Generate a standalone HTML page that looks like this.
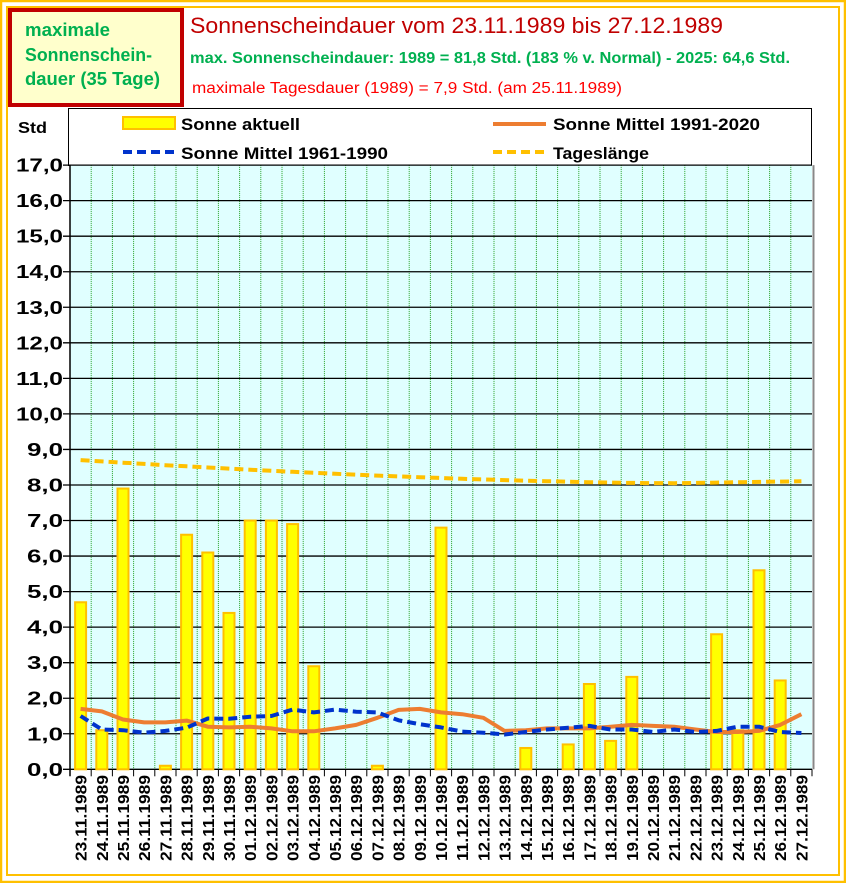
<!DOCTYPE html>
<html><head><meta charset="utf-8"><style>
html,body{margin:0;padding:0;background:#fff}
svg{display:block}
text{font-family:"Liberation Sans",sans-serif;font-weight:bold}
</style></head><body>
<svg id="s" width="846" height="883" xmlns="http://www.w3.org/2000/svg">
<rect x="1" y="1" width="844" height="881" fill="#fff" stroke="#FFC000" stroke-width="2.5"/>
<rect x="7" y="7" width="832" height="868" fill="none" stroke="#FFC000" stroke-width="2"/>
<rect x="10" y="10" width="172" height="95" fill="#FFFFCC" stroke="#C00000" stroke-width="4"/>
<text x="25" y="36" fill="#00B050" font-size="18" textLength="85" lengthAdjust="spacingAndGlyphs">maximale</text>
<text x="25" y="61" fill="#00B050" font-size="18" textLength="127" lengthAdjust="spacingAndGlyphs">Sonnenschein-</text>
<text x="25" y="85" fill="#00B050" font-size="18" textLength="135" lengthAdjust="spacingAndGlyphs">dauer (35 Tage)</text>
<text x="190" y="33" fill="#C00000" font-size="22" textLength="533" lengthAdjust="spacingAndGlyphs" style="font-weight:normal">Sonnenscheindauer vom 23.11.1989 bis 27.12.1989</text>
<text x="190" y="63" fill="#00B050" font-size="15.5" textLength="600" lengthAdjust="spacingAndGlyphs">max. Sonnenscheindauer: 1989 = 81,8 Std. (183 % v. Normal) - 2025: 64,6 Std.</text>
<text x="192" y="93" fill="#FF0000" font-size="15.5" textLength="430" lengthAdjust="spacingAndGlyphs" style="font-weight:normal">maximale Tagesdauer (1989) = 7,9 Std. (am 25.11.1989)</text>
<rect x="68.5" y="108.5" width="743" height="57" fill="#fff" stroke="#000" stroke-width="1"/>
<rect x="123" y="117" width="52" height="12" fill="#FFFF00" stroke="#FFC000" stroke-width="2"/>
<text x="181" y="130" font-size="17" textLength="119" lengthAdjust="spacingAndGlyphs">Sonne aktuell</text>
<line x1="123" y1="152" x2="175" y2="152" stroke="#0033CC" stroke-width="4" stroke-dasharray="9,5"/>
<text x="181" y="159" font-size="17" textLength="207" lengthAdjust="spacingAndGlyphs">Sonne Mittel 1961-1990</text>
<line x1="493" y1="124" x2="546" y2="124" stroke="#ED7D31" stroke-width="4"/>
<text x="553" y="130" font-size="17" textLength="207" lengthAdjust="spacingAndGlyphs">Sonne Mittel 1991-2020</text>
<line x1="493" y1="152" x2="546" y2="152" stroke="#FFC000" stroke-width="4" stroke-dasharray="9,5"/>
<text x="553" y="159" font-size="17" textLength="96" lengthAdjust="spacingAndGlyphs">Tageslänge</text>
<text x="18" y="133" font-size="16" textLength="29" lengthAdjust="spacingAndGlyphs">Std</text>
<g id="g"></g>
</svg>
<script>
var g=document.getElementById('g'),NS='http://www.w3.org/2000/svg';
function el(t,a,txt){var e=document.createElementNS(NS,t);for(var k in a)e.setAttribute(k,a[k]);if(txt!=null)e.textContent=txt;g.appendChild(e);return e;}
var X0=70,X1=812,Y0=769.3,U=35.54,N=35,W=(X1-X0)/N;
function Y(v){return Y0-v*U;}
el('rect',{x:X0,y:Y(17),width:X1-X0,height:Y0-Y(17),fill:'#E0FFFF'});
el('line',{x1:X1+1.5,y1:Y(17),x2:X1+1.5,y2:Y0,stroke:'#888','stroke-width':2});
for(var i=1;i<N;i++){var x=X0+i*W;el('line',{x1:x,y1:Y(17),x2:x,y2:Y0,stroke:'#22A022','stroke-width':1,'stroke-dasharray':'1,1'});}
for(var v=0;v<=17;v++){var y=Y(v);el('line',{x1:63,y1:y,x2:X1,y2:y,stroke:'#000','stroke-width':1.3});
var s=v+',0';el('text',{x:63,y:y+6.5,'font-size':18,'text-anchor':'end',textLength:(s.length==4?47:36),lengthAdjust:'spacingAndGlyphs'},s);}
el('line',{x1:X0,y1:Y(17),x2:X0,y2:Y0+7,stroke:'#000','stroke-width':1.5});
var bars=[4.7,1.1,7.9,0,0.1,6.6,6.1,4.4,7.0,7.0,6.9,2.9,0,0,0.1,0,0,6.8,0,0,0,0.6,0,0.7,2.4,0.8,2.6,0,0,0,3.8,1.1,5.6,2.5,0];
for(var i=0;i<N;i++){var cx=X0+(i+0.5)*W;if(bars[i]>0)el('rect',{x:cx-5.5,y:Y(bars[i]),width:11,height:Y0-Y(bars[i]),fill:'#FFFF00',stroke:'#FFC000','stroke-width':2});
el('line',{x1:X0+(i+1)*W,y1:Y0,x2:X0+(i+1)*W,y2:Y0+7,stroke:'#000','stroke-width':1});}
function pl(d,a){var p=d.map(function(v,i){return (X0+(i+0.5)*W).toFixed(1)+','+Y(v).toFixed(1)}).join(' ');a.points=p;a.fill='none';a['stroke-linejoin']='round';el('polyline',a);}
var tl=[];for(var i=0;i<N;i++){var t=i/28;tl.push(i<=28?8.05+0.65*Math.pow(1-t,1.6):8.05+(i-28)*0.009);}
pl(tl,{stroke:'#FFC000','stroke-width':4,'stroke-dasharray':'9,5'});
var org=[1.7,1.63,1.4,1.32,1.32,1.37,1.2,1.18,1.2,1.15,1.07,1.07,1.15,1.25,1.45,1.67,1.7,1.6,1.55,1.45,1.08,1.1,1.15,1.15,1.15,1.2,1.25,1.22,1.2,1.12,1.05,1.05,1.08,1.25,1.55];
pl(org,{stroke:'#ED7D31','stroke-width':4});
var blu=[1.5,1.12,1.1,1.03,1.08,1.17,1.43,1.42,1.48,1.5,1.68,1.6,1.68,1.62,1.6,1.38,1.27,1.18,1.06,1.03,0.98,1.05,1.12,1.17,1.22,1.12,1.12,1.05,1.12,1.05,1.08,1.2,1.2,1.05,1.02];
pl(blu,{stroke:'#0033CC','stroke-width':4,'stroke-dasharray':'9,5'});
var d=new Date(1989,10,23);
for(var i=0;i<N;i++){var dd=('0'+d.getDate()).slice(-2),mm=('0'+(d.getMonth()+1)).slice(-2);var cx=X0+(i+0.5)*W+6;
el('text',{x:0,y:0,'font-size':16,'text-anchor':'end',textLength:86,lengthAdjust:'spacingAndGlyphs',transform:'translate('+cx.toFixed(1)+',775) rotate(-90)'},dd+'.'+mm+'.1989');d.setDate(d.getDate()+1);}
</script>
</body></html>
